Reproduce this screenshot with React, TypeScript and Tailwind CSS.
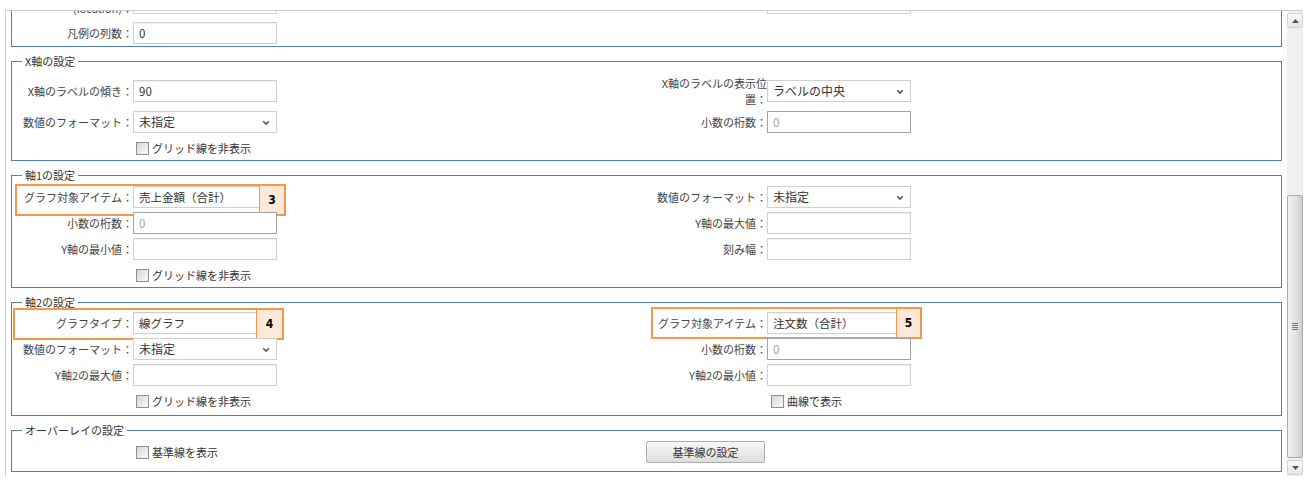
import React from "react";

const FONT = "font-['Noto_Sans_CJK_JP','Noto_Sans',sans-serif]";

type Note = { n: string; pos: string; badge: string };

function Annotation({ note }: { note: Note }) {
  return (
    <div className={`absolute h-[32px] w-[271px] border-2 border-[#f79646] ${note.pos}`}>
      <div
        className={`absolute right-0 top-0 bottom-0 ${note.badge} flex items-center justify-center border-l border-[#f79646] bg-[#fde9d9] font-['DejaVu_Sans_Condensed','Liberation_Sans',sans-serif] text-[12px] font-bold text-black`}
      >
        {note.n}
      </div>
    </div>
  );
}

function TextBox({ value = "", disabled = false }: { value?: string; disabled?: boolean }) {
  return (
    <input
      readOnly
      value={value}
      className={`h-[22px] w-[144px] shrink-0 border bg-white px-[5px] text-[11.5px] outline-none ${FONT} ${
        disabled
          ? "border-[#a3a3a3] text-[#a0a0a0]"
          : "border-[#cfcfcf] text-[#333] shadow-[inset_0_1px_1px_rgba(0,0,0,0.06)]"
      }`}
    />
  );
}

function SelectBox({ value }: { value: string }) {
  return (
    <div className="relative flex h-[22px] w-[144px] shrink-0 items-center border border-[#cfcfcf] bg-white pl-[5px] text-[12px] text-[#333]">
      {value}
      <svg className="absolute right-[6px] top-[8px]" width="8" height="6" viewBox="0 0 8 6">
        <path d="M1.2 1.2 L4 4 L6.8 1.2" fill="none" stroke="#555" strokeWidth="1.6" />
      </svg>
    </div>
  );
}

function Field({
  label,
  side,
  children,
  note,
  tall = false,
}: {
  label: React.ReactNode;
  side: "l" | "r";
  children: React.ReactNode;
  note?: Note;
  tall?: boolean;
}) {
  return (
    <div className="relative flex items-center">
      <div
        className={`shrink-0 text-right text-[11px] text-[#444] ${side === "l" ? "w-[121px]" : "w-[113px]"} ${
          tall ? "leading-[16px]" : "leading-[15px]"
        }`}
      >
        {label}
      </div>
      {children}
      {note && <Annotation note={note} />}
    </div>
  );
}

function Check({ label, side }: { label: string; side: "l" | "r" }) {
  return (
    <div className={`flex h-[22px] items-center ${side === "l" ? "pl-[124px]" : "pl-[117px]"}`}>
      <span className="h-[13px] w-[13px] shrink-0 border border-[#8f8f8f] bg-linear-to-br from-[#d6d6d6] to-[#fbfbfb]" />
      <span className="ml-[3px] text-[11px] leading-[15px] text-[#333]">{label}</span>
    </div>
  );
}

function Group({
  title,
  pad,
  children,
}: {
  title: string;
  pad: string;
  children: React.ReactNode;
}) {
  return (
    <fieldset className="mt-[7px] border border-[#4a7fc1]">
      <legend className="ml-[10px] px-[3px] text-[11px] leading-[15px] text-[#333]">{title}</legend>
      <div className={`grid grid-cols-[642px_1fr] items-center gap-y-[4px] ${pad}`}>{children}</div>
    </fieldset>
  );
}

function ScrollBar() {
  return (
    <div className="flex w-[16px] shrink-0 flex-col bg-[#f0f0f0] pt-[2px]">
      <div className="flex h-[15px] items-center justify-center rounded-[2px] border border-[#d2d2d2] bg-linear-to-b from-[#fafafa] to-[#e6e6e6]">
        <svg width="7" height="4" viewBox="0 0 7 4">
          <path d="M0 4 L3.5 0 L7 4 Z" fill="#555" />
        </svg>
      </div>
      <div className="h-[167px]" />
      <div className="flex h-[263px] items-center justify-center rounded-[2px] border border-[#a9a9a9] bg-linear-to-r from-[#f2f2f2] via-[#e3e3e3] to-[#cfcfcf]">
        <div className="flex w-[6px] flex-col gap-[1px]">
          <span className="h-px bg-[#777]" />
          <span className="h-px bg-[#777]" />
          <span className="h-px bg-[#777]" />
          <span className="h-px bg-[#777]" />
        </div>
      </div>
      <div className="mt-[2px] flex h-[15px] items-center justify-center rounded-[2px] border border-[#d2d2d2] bg-linear-to-b from-[#fafafa] to-[#e6e6e6]">
        <svg width="7" height="4" viewBox="0 0 7 4">
          <path d="M0 0 L3.5 4 L7 0 Z" fill="#555" />
        </svg>
      </div>
    </div>
  );
}

export default function App() {
  return (
    <div className={`h-[487px] w-[1309px] bg-white ${FONT}`}>
      <div className="ml-[5px] flex h-[466px] w-[1298px] pt-[10px] box-content">
        <div className="flex w-full border-l border-t border-[#cccccc]">
          <div className="w-[1281px] shrink-0 overflow-hidden px-[5px]">
            {/* legend group, scrolled past its top */}
            <div className="-mt-[24px] border-x border-b border-[#4a7fc1]">
              <div className="grid grid-cols-[642px_1fr] items-center gap-y-[3px] pb-[2px]">
                <Field side="l" tall label={<span className="relative -top-[3px]">凡例の表示位置<br />(location)：</span>}>
                  <TextBox value="" />
                </Field>
                <Field side="r" label="">
                  <SelectBox value="" />
                </Field>
                <Field side="l" label="凡例の列数：">
                  <TextBox value="0" />
                </Field>
                <div />
              </div>
            </div>

            <Group title="X軸の設定" pad="pt-[6px] pb-[1px]">
              <Field side="l" label="X軸のラベルの傾き：">
                <TextBox value="90" />
              </Field>
              <Field side="r" tall label="X軸のラベルの表示位置：">
                <SelectBox value="ラベルの中央" />
              </Field>
              <Field side="l" label="数値のフォーマット：">
                <SelectBox value="未指定" />
              </Field>
              <Field side="r" label="小数の桁数：">
                <TextBox value="0" disabled />
              </Field>
              <Check side="l" label="グリッド線を非表示" />
              <div />
            </Group>

            <Group title="軸1の設定" pad="pt-[3px] pb-[1px]">
              <Field
                side="l"
                label="グラフ対象アイテム："
                note={{ n: "3", pos: "left-[3px] -top-[2px]", badge: "w-[25px]" }}
              >
                <TextBox value="売上金額（合計）" />
              </Field>
              <Field side="r" label="数値のフォーマット：">
                <SelectBox value="未指定" />
              </Field>
              <Field side="l" label="小数の桁数：">
                <TextBox value="0" disabled />
              </Field>
              <Field side="r" label="Y軸の最大値：">
                <TextBox />
              </Field>
              <Field side="l" label="Y軸の最小値：">
                <TextBox />
              </Field>
              <Field side="r" label="刻み幅：">
                <TextBox />
              </Field>
              <Check side="l" label="グリッド線を非表示" />
              <div />
            </Group>

            <Group title="軸2の設定" pad="pt-[2px] pb-[3px]">
              <Field
                side="l"
                label="グラフタイプ："
                note={{ n: "4", pos: "left-[1px] -top-[4px]", badge: "w-[26px]" }}
              >
                <TextBox value="線グラフ" />
              </Field>
              <Field
                side="r"
                label="グラフ対象アイテム："
                note={{ n: "5", pos: "-left-[3px] -top-[5px]", badge: "w-[24px]" }}
              >
                <TextBox value="注文数（合計）" />
              </Field>
              <Field side="l" label="数値のフォーマット：">
                <SelectBox value="未指定" />
              </Field>
              <Field side="r" label="小数の桁数：">
                <TextBox value="0" disabled />
              </Field>
              <Field side="l" label="Y軸2の最大値：">
                <TextBox />
              </Field>
              <Field side="r" label="Y軸2の最小値：">
                <TextBox />
              </Field>
              <Check side="l" label="グリッド線を非表示" />
              <Check side="r" label="曲線で表示" />
            </Group>

            <fieldset className="mt-[7px] border border-[#4a7fc1]">
              <legend className="ml-[10px] px-[3px] text-[11px] leading-[15px] text-[#333]">オーバーレイの設定</legend>
              <div className="grid grid-cols-[634px_1fr] items-center pt-[3px] pb-[8px]">
                <Check side="l" label="基準線を表示" />
                <div>
                  <button className="flex h-[22px] w-[119px] items-center justify-center rounded-[2px] border border-[#acacac] bg-linear-to-b from-[#f7f7f7] to-[#dedede] text-[11px] text-[#333]">
                    基準線の設定
                  </button>
                </div>
              </div>
            </fieldset>
          </div>
          <ScrollBar />
        </div>
      </div>
    </div>
  );
}
